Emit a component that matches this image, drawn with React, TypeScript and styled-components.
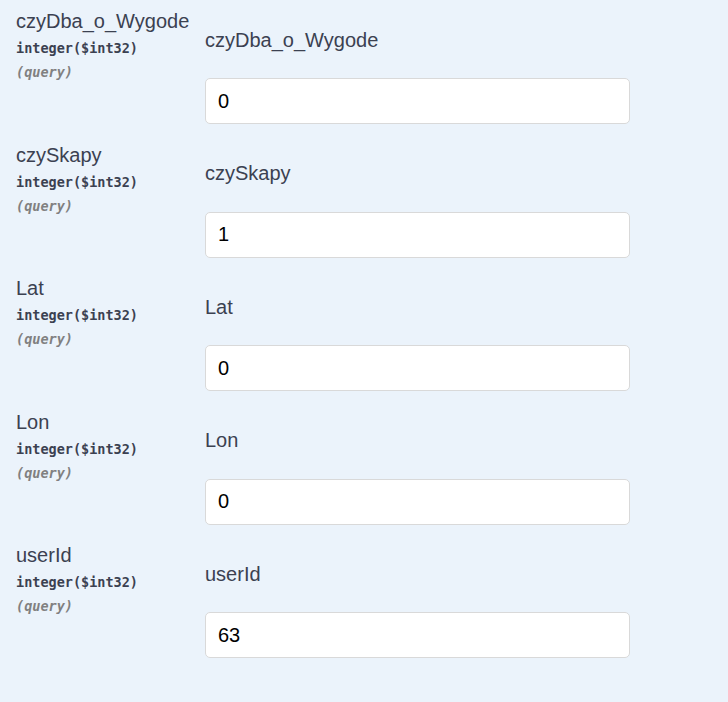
import React from "react";
import styled, { createGlobalStyle } from "styled-components";

const Global = createGlobalStyle`
  html, body {
    margin: 0;
    padding: 0;
    background: #ebf3fb;
    min-height: 100%;
  }
  body {
    font-family: "Liberation Sans", Arial, sans-serif;
    color: #3b4151;
  }
`;

const Table = styled.div`
  display: flex;
  flex-direction: column;
  padding-left: 16px;
`;

const Row = styled.div`
  display: grid;
  grid-template-columns: 189px 425px;
  padding: 10px 0 9.5px;
`;

const NameCol = styled.div`
  display: flex;
  flex-direction: column;
`;

const Name = styled.div`
  font-size: 20px;
  line-height: 23px;
  color: #3b4151;
  white-space: nowrap;
`;

const Type = styled.div`
  margin-top: 5px;
  font-family: "DejaVu Sans Mono", "Liberation Mono", monospace;
  font-size: 13.5px;
  font-weight: 700;
  line-height: 20px;
  color: #3b4151;
  white-space: nowrap;
`;

const Format = styled.span`
  color: #3b4151;
`;

const In = styled.div`
  margin-top: 4px;
  font-family: "DejaVu Sans Mono", "Liberation Mono", monospace;
  font-size: 13.5px;
  font-weight: 700;
  font-style: italic;
  line-height: 20px;
  color: #808080;
`;

const DescCol = styled.div`
  display: flex;
  flex-direction: column;
`;

const Label = styled.p`
  margin: 18.5px 0 26.5px;
  font-size: 20px;
  line-height: 23px;
  color: #3b4151;
`;

const Input = styled.input`
  box-sizing: border-box;
  width: 425px;
  height: 46px;
  margin: 0;
  padding: 0 12px;
  border: 1px solid #d9d9d9;
  border-radius: 5px;
  background: #fff;
  font-family: "Liberation Sans", Arial, sans-serif;
  font-size: 20px;
  color: #000;
  outline: none;
`;

const params = [
  { name: "czyDba_o_Wygode", value: "0" },
  { name: "czySkapy", value: "1" },
  { name: "Lat", value: "0" },
  { name: "Lon", value: "0" },
  { name: "userId", value: "63" },
];

export default function App() {
  return (
    <>
      <Global />
      <Table>
        {params.map((p) => (
          <Row key={p.name}>
            <NameCol>
              <Name>{p.name}</Name>
              <Type>
                integer<Format>($int32)</Format>
              </Type>
              <In>(query)</In>
            </NameCol>
            <DescCol>
              <Label>{p.name}</Label>
              <Input type="text" defaultValue={p.value} />
            </DescCol>
          </Row>
        ))}
      </Table>
    </>
  );
}
